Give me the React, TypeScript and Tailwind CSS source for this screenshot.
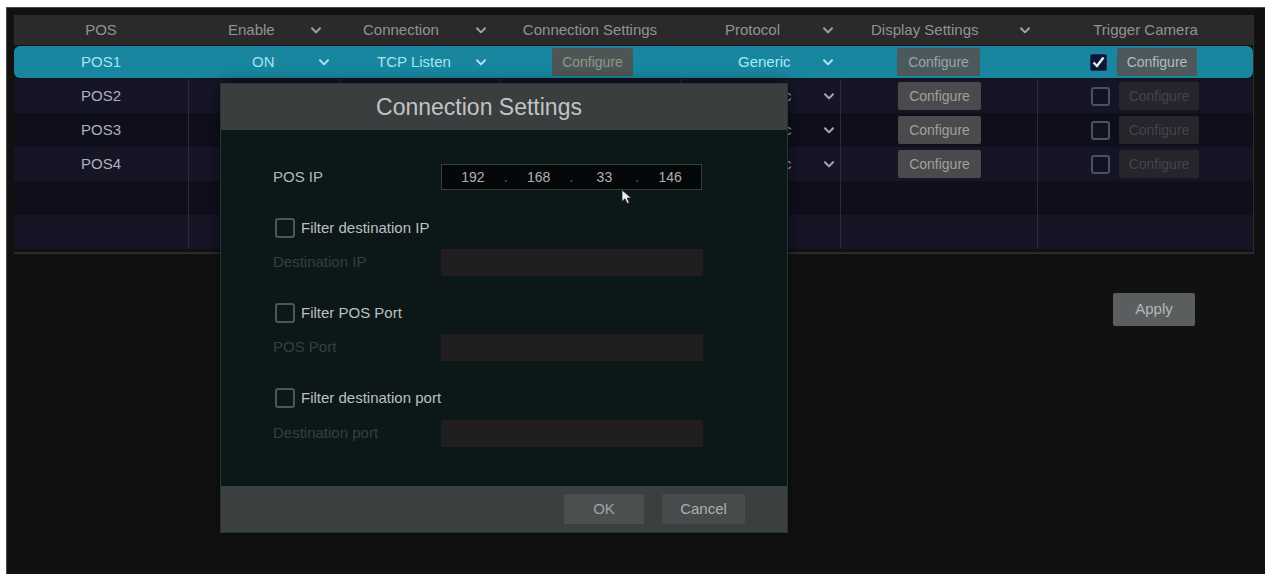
import React from "react";

const FONT = { fontFamily: '"Liberation Sans", Arial, sans-serif' };

const Chevron = ({ className = "" }: { className?: string }) => (
  <svg width="10" height="7" viewBox="0 0 10 7" className={className}>
    <path d="M1 1.2 L5 5.4 L9 1.2" stroke="currentColor" strokeWidth="2" fill="none" strokeLinecap="round" strokeLinejoin="round" />
  </svg>
);

const COLS = "grid grid-cols-[174px_152px_160px_180px_160px_197px_217px]";

const Box = ({ checked = false }: { checked?: boolean }) =>
  checked ? (
    <div className="w-[17px] h-[17px] rounded-[2px] bg-[#0d1634] border border-[#22305a] flex items-center justify-center">
      <svg width="13" height="12" viewBox="0 0 13 12">
        <path d="M1.5 6.5 L5 10 L11.5 1.5" stroke="#e8eef5" strokeWidth="2.4" fill="none" />
      </svg>
    </div>
  ) : (
    <div className="w-[19px] h-[19px] rounded-[3px] border-2 border-[#4c5160] bg-[#101322]" />
  );

function DataRow({ name, idx }: { name: string; idx: number }) {
  const bg = idx % 2 === 0 ? "bg-[#151526]" : "bg-[#0f0f1c]";
  const cell = "flex items-center h-full border-l border-[#2a2a3c]";
  const empty = name === "";
  return (
    <div className={`${COLS} h-[34px] ${bg} text-[#b0b0b8]`}>
      <div className="flex items-center justify-center h-full">{name}</div>
      {/* Enable, Connection and Connection Settings cells lie under the dialog */}
      <div className={cell} />
      <div className={cell} />
      <div className={cell} />
      <div className={`${cell} pl-[58px]`}>
        {!empty && (
          <>
            <span className="w-[85px]">Generic</span>
            <Chevron className="text-[#a6a6b2]" />
          </>
        )}
      </div>
      <div className={`${cell} pl-[57px]`}>
        {!empty && (
          <div className="w-[83px] h-[28px] bg-[#4a4a4c] rounded-[2px] flex items-center justify-center text-[#a0a0a0] text-[14px]">
            Configure
          </div>
        )}
      </div>
      <div className={`${cell} pl-[53px]`}>
        {!empty && (
          <>
            <Box />
            <div className="ml-[9px] w-[80px] h-[28px] bg-[#25252b] rounded-[2px] flex items-center justify-center text-[#44444b] text-[14px]">
              Configure
            </div>
          </>
        )}
      </div>
    </div>
  );
}

function CheckLine({ label }: { label: string }) {
  return (
    <div className="flex items-center h-[20px] pl-[2px]">
      <div className="w-[20px] h-[20px] rounded-[3px] border-2 border-[#4c5858]" />
      <span className="ml-[6px] text-[#bcc0c0]">{label}</span>
    </div>
  );
}

function DisabledLine({ label }: { label: string }) {
  return (
    <div className="flex items-center h-[27px]">
      <span className="w-[168px] text-[#34403f]">{label}</span>
      <div className="w-[262px] h-[27px] bg-[#211e1f] rounded-[1px]" />
    </div>
  );
}

export default function App() {
  return (
    <div className="w-[1265px] h-[574px] bg-white pt-[7px] pl-[6px] overflow-hidden" style={FONT}>
      <div className="relative w-full h-full bg-[#111111] border-l border-t border-[#4a4a4a] px-[7px] pt-[7px] text-[15px]">
        {/* Table */}
        <div className="w-[1240px] border-b-2 border-r border-[#2c2c2c] pb-[3px]">
          <div className={`${COLS} h-[30px] bg-[#2a2a2a] text-[#929292] items-center`}>
            <div className="flex justify-center">POS</div>
            <div className="flex items-center pl-[40px]">
              <span className="w-[83px]">Enable</span>
              <Chevron className="text-[#a0a0a0]" />
            </div>
            <div className="flex items-center pl-[23px]">
              <span className="w-[113px]">Connection</span>
              <Chevron className="text-[#a0a0a0]" />
            </div>
            <div className="flex justify-center">Connection Settings</div>
            <div className="flex items-center pl-[45px]">
              <span className="w-[98px]">Protocol</span>
              <Chevron className="text-[#a0a0a0]" />
            </div>
            <div className="flex items-center pl-[31px]">
              <span className="w-[149px]">Display Settings</span>
              <Chevron className="text-[#a0a0a0]" />
            </div>
            <div className="flex justify-center">Trigger Camera</div>
          </div>

          {/* selected row */}
          <div className="h-[34px] py-[1px] bg-[#111118]">
            <div className={`${COLS} h-full rounded-[6px] bg-[#18869f] text-[#a8e4f0]`}>
              <div className="flex items-center justify-center">POS1</div>
              <div className="flex items-center pl-[64px]">
                <span className="w-[67px]">ON</span>
                <Chevron className="text-[#a8e4f0]" />
              </div>
              <div className="flex items-center pl-[37px]">
                <span className="w-[99px]">TCP Listen</span>
                <Chevron className="text-[#a8e4f0]" />
              </div>
              <div className="flex items-center pl-[52px]">
                <div className="w-[81px] h-[28px] bg-[#4d5655] rounded-[2px] flex items-center justify-center text-[#8c9a88] text-[14px]">
                  Configure
                </div>
              </div>
              <div className="flex items-center pl-[58px]">
                <span className="w-[85px] text-[#a6eaf6]">Generic</span>
                <Chevron className="text-[#a6eaf6]" />
              </div>
              <div className="flex items-center pl-[57px]">
                <div className="w-[83px] h-[28px] bg-[#4c585b] rounded-[2px] flex items-center justify-center text-[#98a6a8] text-[14px]">
                  Configure
                </div>
              </div>
              <div className="flex items-center pl-[53px]">
                <Box checked />
                <div className="ml-[10px] w-[80px] h-[28px] bg-[#4c585b] rounded-[2px] flex items-center justify-center text-[#b2bcbe] text-[14px]">
                  Configure
                </div>
              </div>
            </div>
          </div>

          <DataRow name="POS2" idx={0} />
          <DataRow name="POS3" idx={1} />
          <DataRow name="POS4" idx={0} />
          <DataRow name="" idx={1} />
          <DataRow name="" idx={0} />
        </div>

        {/* Apply */}
        <div className="w-[1240px] flex justify-end pr-[59px] mt-[39px]">
          <div className="w-[82px] h-[33px] bg-[#5a5e5e] rounded-[2px] flex items-center justify-center text-[#b4b8b8]">
            Apply
          </div>
        </div>

        {/* Modal */}
        <div className="absolute left-[213px] top-[75px] w-[568px] h-[450px] flex flex-col border border-[#2a3434] shadow-[0_0_12px_rgba(0,0,0,0.6)]">
          <div className="h-[46px] bg-[#3a3e3e] flex items-center justify-center pr-[50px] text-[23px] text-[#c2c4c4]">
            Connection Settings
          </div>
          <div className="flex-1 bg-[#0c1717] pl-[52px] pt-[34px] flex flex-col">
            <div className="flex items-center h-[26px]">
              <span className="w-[168px] text-[#b4b8b8]">POS IP</span>
              <div className="w-[261px] h-[26px] bg-[#050808] border border-[#34403f] flex items-center text-[14px] text-[#b0b0b0]">
                <span className="w-[62px] text-center">192</span>
                <span className="w-[4px] text-center text-[#6a6a6a]">.</span>
                <span className="w-[62px] text-center">168</span>
                <span className="w-[4px] text-center text-[#6a6a6a]">.</span>
                <span className="w-[62px] text-center">33</span>
                <span className="w-[4px] text-center text-[#6a6a6a]">.</span>
                <span className="w-[62px] text-center">146</span>
              </div>
            </div>
            <div className="mt-[28px]">
              <CheckLine label="Filter destination IP" />
            </div>
            <div className="mt-[11px]">
              <DisabledLine label="Destination IP" />
            </div>
            <div className="mt-[27px]">
              <CheckLine label="Filter POS Port" />
            </div>
            <div className="mt-[11px]">
              <DisabledLine label="POS Port" />
            </div>
            <div className="mt-[27px]">
              <CheckLine label="Filter destination port" />
            </div>
            <div className="mt-[12px]">
              <DisabledLine label="Destination port" />
            </div>
          </div>
          <div className="h-[46px] bg-[#3a3f3f] flex items-center justify-end pr-[42px] gap-[18px]">
            <div className="w-[80px] h-[30px] bg-[#4a5050] rounded-[2px] flex items-center justify-center text-[#a0a4a4]">
              OK
            </div>
            <div className="w-[83px] h-[30px] bg-[#464c4c] rounded-[2px] flex items-center justify-center text-[#acb0b0]">
              Cancel
            </div>
          </div>
        </div>

        {/* Mouse cursor */}
        <svg className="absolute left-[614px] top-[181px]" width="13" height="16" viewBox="0 0 13 16">
          <path d="M1 1 L1 12.5 L4 9.8 L6.3 14.5 L8.3 13.6 L6.1 9 L10.2 9 Z" fill="#f0f0f0" stroke="#222" strokeWidth="0.8" />
        </svg>
      </div>
    </div>
  );
}
